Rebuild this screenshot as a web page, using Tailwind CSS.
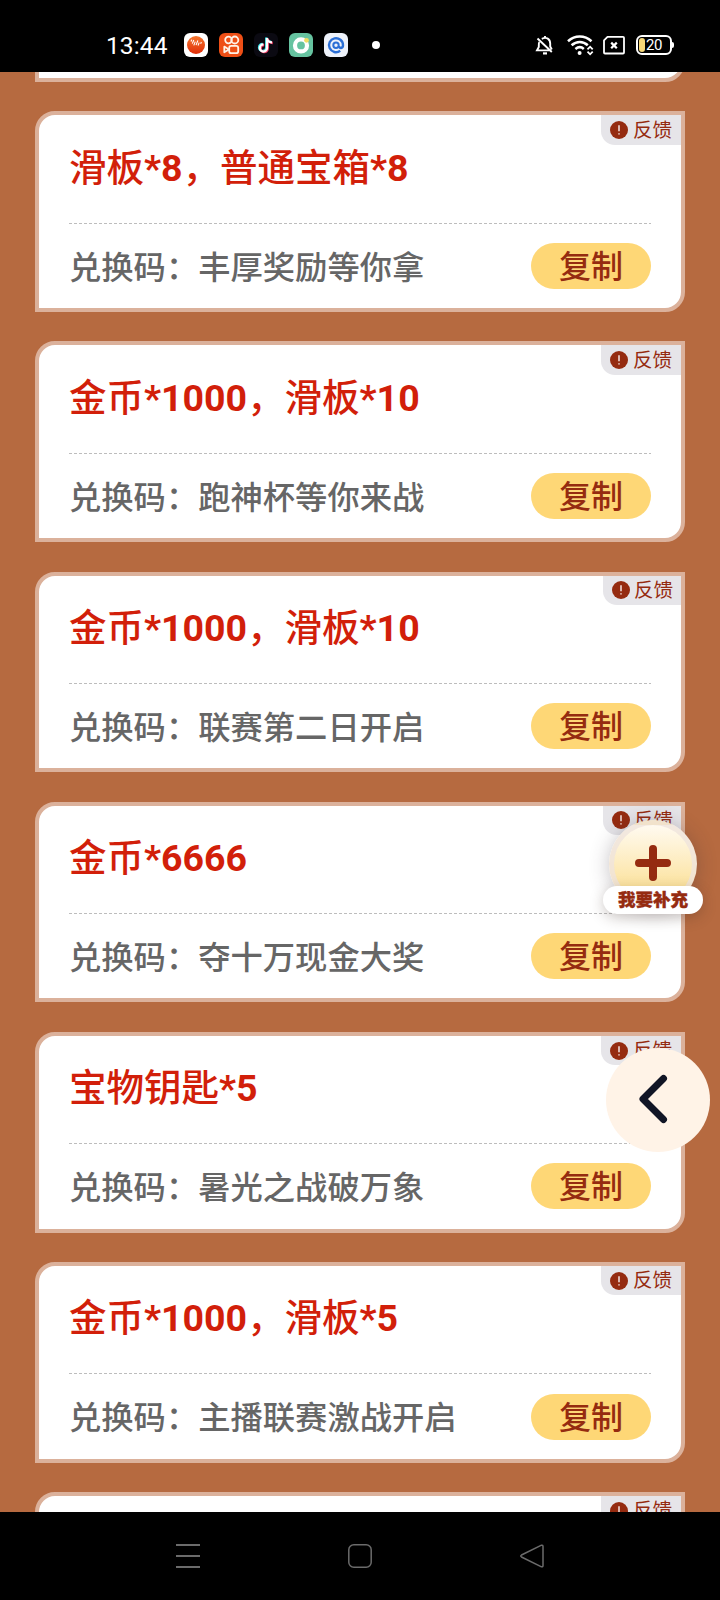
<!DOCTYPE html>
<html lang="zh-CN">
<head>
<meta charset="utf-8">
<title>兑换码</title>
<script src="https://cdn.jsdelivr.net/npm/@tailwindcss/browser@4"></script>
</head>
<body class="relative flex h-[1600px] w-[720px] flex-col overflow-hidden bg-[#b66a40] font-[Roboto,'Noto_Sans_CJK_SC',sans-serif]">

<svg class="hidden">
  <symbol id="warn" viewBox="0 0 18 18"><circle cx="9" cy="9" r="9" fill="#952b10"/><path d="M9 4.300V10.200M9 12.200V13.600" stroke="#f3e6e3" stroke-width="1.500"/></symbol>
</svg>

<header class="flex h-[72px] shrink-0 items-center bg-black pt-[18px] pl-[106px] pr-[46px] text-white">
  <span class="w-[78px] pt-[1px] text-[24.500px] leading-[53px] tracking-[0.1px]">13:44</span>
  <div class="flex items-center gap-[11px]">
    <svg class="size-6" viewBox="0 0 24 24"><defs><linearGradient id="or" x2="0" y2="1"><stop stop-color="#f4762e"/><stop offset="1" stop-color="#e02d08"/></linearGradient></defs><rect width="24" height="24" rx="6" fill="#fff"/><circle cx="12" cy="12" r="9" fill="url(#or)"/><path d="M6.800 8.500v2M8.800 8v4M10.800 9v4M12.800 7v5M14.800 8.500v3M16.600 7v2" stroke="#fff" stroke-width="1.100" transform="rotate(22 12 10)"/></svg>
    <svg class="size-6" viewBox="0 0 24 24"><rect width="24" height="24" rx="6" fill="#ee4f16"/><g fill="none" stroke="#fff3e8" stroke-width="1.8"><circle cx="9.5" cy="7" r="3.3"/><circle cx="15.800" cy="7" r="3.5"/><rect x="10.200" y="12.800" width="9" height="7.400" rx="2"/><path d="M10 16.400 5.300 13.600v5.700z" stroke-linejoin="round"/></g></svg>
    <svg class="size-6" viewBox="0 0 24 24"><rect width="24" height="24" rx="6" fill="#0b0a12"/><g fill="none" stroke-width="2.300"><path d="M13 5v10a3.600 3.600 0 1 1-3.600-3.600M13 5c.3 2.800 2 4.200 5 4.400" stroke="#35dfe5" transform="translate(-.8 -.6)"/><path d="M13 5v10a3.600 3.600 0 1 1-3.600-3.600M13 5c.3 2.800 2 4.200 5 4.400" stroke="#f23d65" transform="translate(.8 .6)"/><path d="M13 5v10a3.600 3.600 0 1 1-3.600-3.600M13 5c.3 2.800 2 4.200 5 4.400" stroke="#fff"/></g></svg>
    <svg class="size-6" viewBox="0 0 24 24"><rect width="24" height="24" rx="6" fill="#66c3a0"/><circle cx="12" cy="12.400" r="6" fill="none" stroke="#fff" stroke-width="4.200"/><circle cx="17.500" cy="7.300" r="2.400" fill="#f0dd62"/></svg>
    <svg class="size-6" viewBox="0 0 24 24"><rect width="24" height="24" rx="6" fill="#eef2fa"/><path d="M16.200 17.800a7 7 0 1 1 2.800-5.600c0 3.400-3.900 3.700-3.900.7" fill="none" stroke="#2b6fd6" stroke-width="2.400"/><circle cx="12" cy="12.300" r="2.700" fill="none" stroke="#2b6fd6" stroke-width="2"/></svg>
  </div>
  <span class="ml-[24px] size-2 rounded-full bg-white"></span>
  <div class="ml-auto flex items-center">
    <svg class="mr-[13px] h-6 w-[19px]" viewBox="0 0 19 24" fill="none" stroke="#fff" stroke-width="1.900"><path d="M4.300 9C3.600 10 3.800 12 3.800 14L2 17.400H14.500M6.800 5.800C11.500 3.400 15.200 6 15.200 10.500v3l1.600 3M10 3v2.500M2.500 5.500 16.800 19"/><path d="M8 20.400h4" stroke-width="2.200"/></svg>
    <svg class="mr-[9px] h-6 w-[27px]" viewBox="0 0 27 24" fill="none" stroke="#fff" stroke-width="2.600"><path d="M1 8.200c7-6.200 16.500-6.200 23.500 0M4.600 12.200c5-4.300 11.400-4.300 16.200 0M8.400 16c2.800-2.200 6-2.200 8.400-.1"/><circle cx="12.600" cy="20" r="2" fill="#fff" stroke="none"/><path d="m20.500 16.300 2.600-2.600 2.600 2.600M20.500 18.700l2.600 2.600 2.600-2.600" stroke-width="1.800"/></svg>
    <svg class="mr-[11px] h-6 w-[22px]" viewBox="0 0 22 24" fill="none" stroke="#fff" stroke-width="1.800"><path d="M4.500 3.800H20a1 1 0 0 1 1 1V19.500a1 1 0 0 1-1 1H2a1 1 0 0 1-1-1V7.300z" stroke-linejoin="round"/><path d="m8.200 9.600 5.600 5.600m0-5.600-5.600 5.600" stroke-width="2.200"/></svg>
    <div class="flex h-5 w-9 items-center rounded-[6px] border-2 border-white pl-[1px]">
      <span class="h-[14px] w-[6px] shrink-0 rounded-[3px] bg-[#f7d878]"></span>
      <span class="ml-[1px] text-[15px] leading-none tracking-[-0.500px]">20</span>
    </div>
    <span class="h-[6px] w-[2px] rounded-r bg-white"></span>
  </div>
</header>

<main id="list" class="h-[1440px] shrink-0 overflow-hidden px-[35px]">
  <div class="mb-[29.4px] h-[10px] w-[650px] overflow-hidden"><div class="-mt-[40px] h-[50px] rounded-br-[20px] border-4 border-[#dbb19b] bg-white"></div></div>
</main>

<template id="card">
  <section class="relative mb-[29.3px] flex h-[200.8px] w-[650px] flex-col rounded-tl-[20px] rounded-br-[20px] border-4 border-[#dbb19b] bg-white px-[30px]">
    <div class="badge absolute top-0 right-0 flex h-[29.600px] items-center rounded-bl-[14px] bg-[#e6e5e9] pl-[9px]">
      <svg class="size-[18px] shrink-0"><use href="#warn"/></svg>
      <span class="ml-[5px] text-[19.600px] leading-[29px] whitespace-nowrap text-[#952b10]">反馈</span>
    </div>
    <h2 class="h-[107.500px] shrink-0 whitespace-nowrap pt-[24.500px] text-[37.5px] leading-[56px] font-medium text-[#d21f0a]"></h2>
    <svg class="h-px w-[582px] shrink-0"><path d="M0 .5H582" stroke="#bdbdbd" stroke-dasharray="3 2"/></svg>
    <div class="flex h-[84.3px] items-center justify-between">
      <p class="whitespace-nowrap pt-[3px] text-[32.3px] leading-[46px] font-medium text-[#666]"></p>
      <button class="h-[46px] w-[120px] rounded-full bg-[#fed776] pt-[3px] text-[32px] leading-[43px] font-medium text-[#952b10]">复制</button>
    </div>
  </section>
</template>

<div class="absolute top-[820px] left-[603px] flex w-[100px] flex-col items-center">
  <div class="flex size-[88px] items-center justify-center rounded-full border-[5px] border-[#efe4dc]/80 bg-linear-to-b from-[#fffaf0] to-[#fbdc86] pb-[2px] shadow-[0_2px_20px_rgba(60,50,60,0.3)]">
    <svg class="size-9" viewBox="0 0 36 36"><path d="M18 4v28M4 18h28" stroke="#952b10" stroke-width="8" stroke-linecap="round"/></svg>
  </div>
  <div class="-mt-[22px] h-[28px] w-[100px] rounded-full bg-white text-center text-[17.5px] leading-[28px] font-black text-[#952b10] shadow-[0_4px_14px_rgba(60,40,30,0.25)] [-webkit-text-stroke:0.4px_#952b10]">我要补充</div>
</div>

<div class="absolute top-[1048px] left-[606px] flex size-[104px] items-center justify-center rounded-full bg-[#fff3e7]">
  <svg class="size-[104px]" viewBox="0 0 104 104" fill="none"><path d="M57.500 31.500 37 52l20.500 20.500" transform="translate(0 -1)" stroke="#111525" stroke-width="7" stroke-linecap="round" stroke-linejoin="round"/></svg>
</div>

<nav class="flex h-[88px] shrink-0 items-center justify-between bg-black px-[176px] text-[#6b6b6b]">
  <svg class="size-6" viewBox="0 0 24 24" stroke="currentColor" stroke-width="1.800"><path d="M0 1h24M0 12h24M0 23h24"/></svg>
  <svg class="size-6" viewBox="0 0 24 24" fill="none" stroke="currentColor" stroke-width="1.500"><rect x=".8" y=".8" width="22.400" height="22.400" rx="5"/></svg>
  <svg class="size-6" viewBox="0 0 24 24" fill="none" stroke="currentColor" stroke-width="1.500" stroke-linejoin="round"><path d="M21.500 1.200 1.500 11q-1.500 1 0 2l20 9.800q1.500.3 1.500-1.300V2.500q0-1.600-1.500-1.300z"/></svg>
</nav>

<script>
const items = [
  ['滑板*8，普通宝箱*8', '丰厚奖励等你拿', 80],
  ['金币*1000，滑板*10', '跑神杯等你来战', 80],
  ['金币*1000，滑板*10', '联赛第二日开启', 78],
  ['金币*6666', '夺十万现金大奖', 78],
  ['宝物钥匙*5', '暑光之战破万象', 80],
  ['金币*1000，滑板*5', '主播联赛激战开启', 80],
  ['', '', 80]
];
const list = document.getElementById('list');
const tpl = document.getElementById('card');
for (const [title, code, w] of items) {
  const c = tpl.content.cloneNode(true);
  c.querySelector('h2').innerHTML = title.replace(/\*\d+/g, '<span class="font-bold">$&</span>');
  if (code) c.querySelector('p').textContent = '兑换码：' + code;
  else c.querySelector('button').remove();
  const badge = c.querySelector('.badge');
  badge.style.width = w + 'px';
  if (w < 80) badge.querySelector('span').classList.replace('ml-[5px]', 'ml-[4px]');
  list.append(c);
}
</script>
</body>
</html>
